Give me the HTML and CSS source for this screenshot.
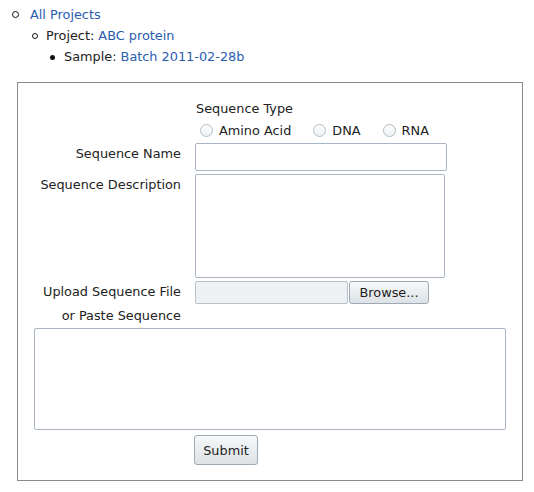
FILE: index.html
```html
<!DOCTYPE html>
<html>
<head>
<meta charset="utf-8">
<link rel="stylesheet" href="styles.css">
</head>
<body>
<ul class="crumbs">
  <li class="lvl1"><a href="#">All Projects</a>
    <ul>
      <li class="lvl2">Project: <a href="#">ABC protein</a>
        <ul>
          <li class="lvl3">Sample: <a href="#">Batch 2011-02-28b</a></li>
        </ul>
      </li>
    </ul>
  </li>
</ul>

<form class="box">
  <div class="form-grid">
    <div></div>
    <div class="type-title">Sequence Type</div>

    <div></div>
    <div class="radios">
      <label class="opt"><input type="radio" name="t"><span>Amino Acid</span></label>
      <label class="opt"><input type="radio" name="t"><span>DNA</span></label>
      <label class="opt"><input type="radio" name="t"><span>RNA</span></label>
    </div>

    <label class="lbl">Sequence Name</label>
    <div><input class="text-in" type="text"></div>

    <label class="lbl">Sequence Description</label>
    <div><textarea class="desc"></textarea></div>

    <label class="lbl lbl-upload">Upload Sequence File</label>
    <div class="file"><span class="file-field"></span><button type="button" class="btn browse">Browse...</button></div>

    <label class="lbl lbl-paste">or Paste Sequence</label>
    <div></div>

    <textarea class="paste"></textarea>

    <div></div>
    <div><button type="button" class="btn submit">Submit</button></div>
  </div>
</form>
</body>
</html>
```
FILE: styles.css
```css
html, body {
  margin: 0;
  padding: 0;
  background: #ffffff;
}

body {
  font-family: "DejaVu Sans", "Liberation Sans", sans-serif;
  font-size: 12.85px;
  color: #222222;
}

a {
  color: #2a5db0;
  text-decoration: none;
}

.crumbs {
  margin: 0;
  padding: 4px 0 0 30px;
  list-style: none;
  line-height: 21px;
}

.crumbs ul {
  list-style: none;
  margin: 0;
  padding: 0;
}

.crumbs li {
  position: relative;
}

.lvl1::before {
  content: "";
  position: absolute;
  left: -18px;
  top: 7px;
  width: 5px;
  height: 5px;
  border: 1px solid #111;
  border-radius: 50%;
}

.lvl1 > ul {
  padding-left: 16px;
}

.lvl2::before {
  content: "";
  position: absolute;
  left: -14px;
  top: 8px;
  width: 4px;
  height: 4px;
  border: 1px solid #111;
  border-radius: 50%;
}

.lvl2 > ul {
  padding-left: 18px;
}

.lvl3::before {
  content: "";
  position: absolute;
  left: -14px;
  top: 9px;
  width: 5px;
  height: 5px;
  background: #111;
  border-radius: 50%;
}

.box {
  margin: 15px 0 0 17px;
  width: 506px;
  box-sizing: border-box;
  border: 1px solid #8a8a8a;
  padding: 17px 16px 15px 16px;
}

.form-grid {
  display: grid;
  grid-template-columns: 147px 1fr;
  column-gap: 14px;
  row-gap: 3px;
}

.type-title {
  line-height: 18px;
  height: 18px;
  padding-left: 1px;
}

.radios {
  display: flex;
  align-items: center;
  height: 19px;
}

.opt {
  display: inline-flex;
  align-items: center;
  margin-right: 17px;
}

.opt input {
  appearance: none;
  -webkit-appearance: none;
  width: 13px;
  height: 13px;
  margin: 0 6px 0 5px;
  border: 1px solid #b4bcc4;
  border-radius: 50%;
  background: linear-gradient(#fdfdfd, #eef1f3);
  box-sizing: border-box;
}

.lbl {
  text-align: right;
  line-height: 18px;
  padding-top: 2px;
}

.lbl-upload {
  padding-top: 2px;
}

.lbl-paste {
  padding-top: 0;
  line-height: 18px;
}

.text-in {
  display: block;
  width: 252px;
  height: 28px;
  box-sizing: border-box;
  margin: 0;
  border: 1px solid #a9b6c2;
  border-radius: 2px;
  background: #fff;
}

.desc {
  display: block;
  width: 250px;
  height: 104px;
  box-sizing: border-box;
  margin: 0;
  border: 1px solid #a9b6c2;
  border-radius: 2px;
  background: #fff;
  resize: none;
}

.file {
  display: flex;
  height: 23px;
}

.file-field {
  display: block;
  width: 153px;
  height: 23px;
  box-sizing: border-box;
  border: 1px solid #b7c1ca;
  border-radius: 2px;
  background: #eef1f4;
}

.btn {
  font-family: "DejaVu Sans", "Liberation Sans", sans-serif;
  font-size: 12.85px;
  color: #222222;
  border: 1px solid #9ea9b3;
  border-radius: 3px;
  background: linear-gradient(#f6f8f9, #dde2e6);
  padding: 0;
  margin: 0;
  box-sizing: border-box;
}

.browse {
  width: 80px;
  height: 23px;
  margin-left: 1px;
}

.paste {
  grid-column: 1 / 3;
  display: block;
  width: 472px;
  height: 102px;
  box-sizing: border-box;
  margin: 0;
  border: 1px solid #a9b6c2;
  border-radius: 2px;
  background: #fff;
  resize: none;
}

.submit {
  width: 64px;
  height: 30px;
  margin: 2px 0 0 -1px;
}
```
